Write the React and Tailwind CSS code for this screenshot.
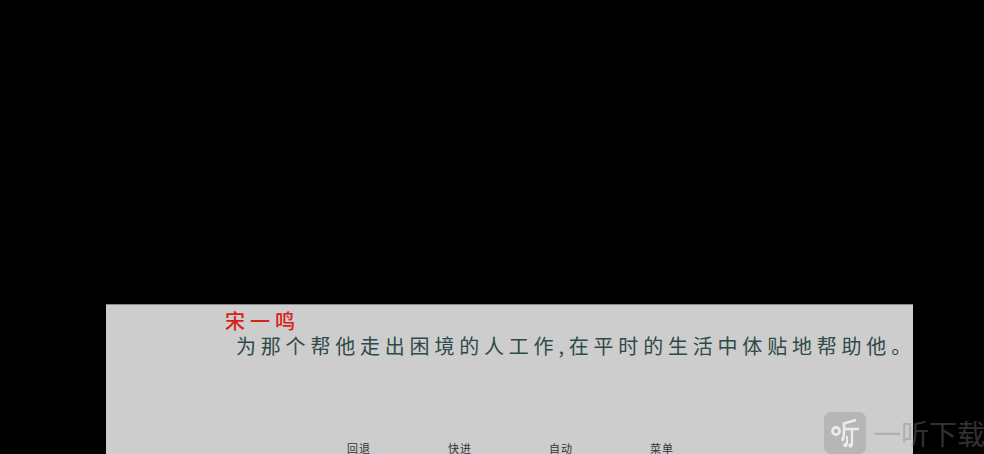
const CJK = { fontFamily: '"Noto Sans CJK SC", "Noto Sans", sans-serif' };

function Logo() {
  return (
    <svg viewBox="0 0 42 42" className="w-[42px] h-[42px]" fill="none">
      <rect width="42" height="42" rx="7" fill="#808080" fillOpacity="0.3" />
      <circle cx="12" cy="19" r="3.6" stroke="#ececec" strokeWidth="2.6" />
      <path d="M32 8 L20 11.5 V21 Q20 26 18 29" stroke="#ececec" strokeWidth="2.6" />
      <path d="M20 17 H35" stroke="#ececec" strokeWidth="2.6" />
      <path d="M28 17 V33" stroke="#ececec" strokeWidth="2.4" />
      <path d="M23 24 V32" stroke="#ececec" strokeWidth="2" />
      <circle cx="21.5" cy="33" r="2.2" fill="#ececec" />
      <circle cx="26.5" cy="33.5" r="2.2" fill="#ececec" />
    </svg>
  );
}

export default function App() {
  return (
    <div className="relative h-[454px] w-[984px] overflow-hidden bg-black pt-[304px] pl-[106px]" style={CJK}>
      <div className="h-[150px] w-[807px] border-t border-t-[#8a8a8a] bg-[#cdcdcd] overflow-hidden">
        <p className="pl-[119px] pt-[5px] text-[20px] leading-[22px] tracking-[5px] text-[#d8201c] font-medium">宋一鸣</p>
        <p className="pl-[130px] text-[20px] leading-[28px] tracking-[4.8px] text-[#2f4a48] whitespace-nowrap">
          为那个帮他走出困境的人工作,在平时的生活中体贴地帮助他。
        </p>
        <div className="mt-[81px] ml-[241px] flex gap-[77px] text-[11px] leading-[14px] tracking-[1px] text-[#333333]">
          <span>回退</span>
          <span>快进</span>
          <span>自动</span>
          <span>菜单</span>
        </div>
      </div>
      <div className="absolute left-[824px] top-[412px] flex items-center gap-[7px]">
        <Logo />
        <span className="text-[28px] leading-[42px] whitespace-nowrap text-[#808080]/40">一听下载</span>
      </div>
    </div>
  );
}
